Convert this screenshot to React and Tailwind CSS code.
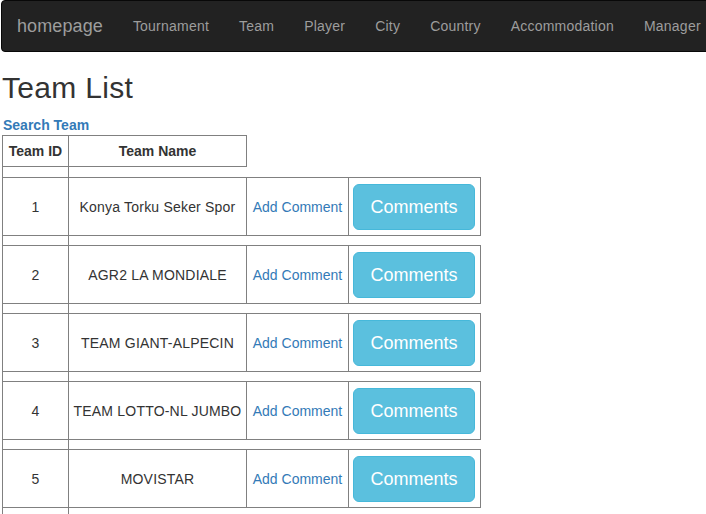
const navItems = ["Tournament", "Team", "Player", "City", "Country", "Accommodation", "Manager"];

const teams = [
  { id: 1, name: "Konya Torku Seker Spor" },
  { id: 2, name: "AGR2 LA MONDIALE" },
  { id: 3, name: "TEAM GIANT-ALPECIN" },
  { id: 4, name: "TEAM LOTTO-NL JUMBO" },
  { id: 5, name: "MOVISTAR" },
];

function Spacer({ first }) {
  return (
    <tr className={first ? "h-[11px]" : "h-[10px]"}>
      <td className="border border-[#808080] p-0" />
      <td className="border border-r-0 border-[#808080] p-0" />
    </tr>
  );
}

export default function App() {
  return (
    <div className="w-full overflow-hidden bg-white font-['Liberation_Sans',Arial,sans-serif] text-[14px] leading-[20px] text-[#333]">
      <nav className="ml-[1px] flex h-[52px] w-[900px] items-center rounded-[4px] border border-[#080808] bg-[#222]">
        <a className="px-[15px] text-[18px] leading-[20px] tracking-[0.1px] text-[#9d9d9d]">homepage</a>
        {navItems.map((item) => (
          <a key={item} className="px-[15px] text-[14px] leading-[20px] tracking-[0.22px] text-[#9d9d9d]">
            {item}
          </a>
        ))}
      </nav>

      <div className="px-[2px]">
        <h2 className="mt-[19px] mb-[11px] text-[30px] leading-[33px] font-medium tracking-[0.3px] text-[#333]">Team List</h2>
        <a className="block pl-[1px] text-[14px] font-bold text-[#337ab7]">Search Team</a>

        <table className="table-fixed border-collapse">
          <colgroup>
            <col className="w-[66px]" />
            <col className="w-[178px]" />
            <col className="w-[102px]" />
            <col className="w-[132px]" />
          </colgroup>
          <tbody>
            <tr className="h-[31px]">
              <th className="border border-[#808080] px-[4px] text-center font-bold whitespace-nowrap">Team ID</th>
              <th className="border border-[#808080] px-[6px] text-center font-bold whitespace-nowrap">Team Name</th>
            </tr>
            <Spacer first />
            {teams.map((team) => (
              <TeamRow key={team.id} team={team} />
            ))}
          </tbody>
        </table>
      </div>
    </div>
  );
}

function TeamRow({ team }) {
  return (
    <>
      <tr className="h-[58px]">
        <td className="border border-[#808080] text-center align-middle">{team.id}</td>
        <td className="border border-[#808080] text-center align-middle whitespace-nowrap tracking-[0.2px]">{team.name}</td>
        <td className="border border-[#808080] px-[4px] text-center align-middle whitespace-nowrap">
          <a className="text-[#337ab7]">Add Comment</a>
        </td>
        <td className="border border-[#808080] px-[4px] align-middle">
          <button className="w-[122px] rounded-[6px] border border-[#46b8da] bg-[#5bc0de] px-[16px] py-[10px] text-[18px] leading-[24px] text-white">
            Comments
          </button>
        </td>
      </tr>
      <Spacer />
    </>
  );
}
